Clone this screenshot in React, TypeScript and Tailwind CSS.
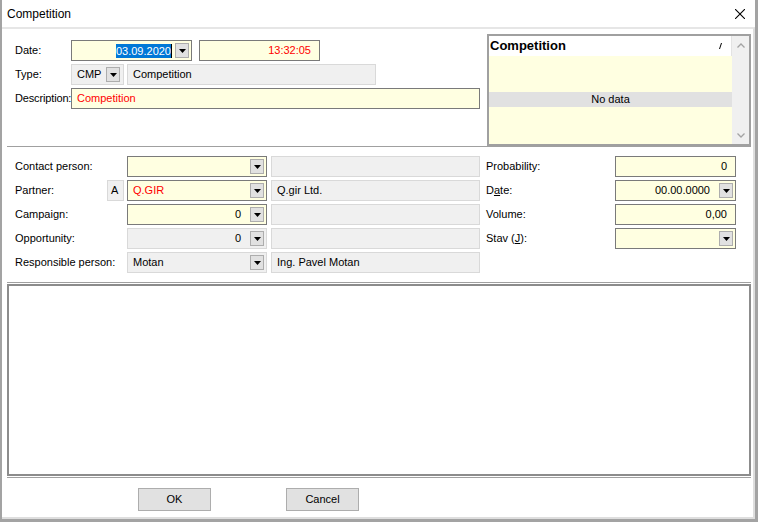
import React from "react";

const Drop = () => (
  <span className="flex h-[15px] w-[14px] shrink-0 items-center justify-center border border-[#adadad] bg-[#e1e1e1]">
    <svg width="7" height="4" viewBox="0 0 7 4">
      <path d="M0 0h7L3.5 4z" fill="#000" />
    </svg>
  </span>
);

type FieldProps = {
  className?: string;
  value?: string;
  yellow?: boolean;
  right?: boolean;
  red?: boolean;
  drop?: boolean;
};

function Field({ className = "", value = "", yellow = false, right = false, red = false, drop = false }: FieldProps) {
  return (
    <div
      className={`flex h-full shrink-0 items-center border ${
        yellow ? "border-[#7a7a7a] bg-[#ffffe1]" : "border-[#d9d9d9] bg-[#f0f0f0]"
      } ${className}`}
    >
      <span
        className={`flex-1 truncate whitespace-nowrap ${right ? "text-right" : "text-left pl-[5px]"} ${
          right ? (drop ? "pr-[9px]" : "pr-[8px]") : ""
        } ${red ? "text-[#ff0000]" : "text-black"}`}
      >
        {value}
      </span>
      {drop && (
        <span className="mr-[2px]">
          <Drop />
        </span>
      )}
    </div>
  );
}

function Row({ children }: { children: React.ReactNode }) {
  return <div className="flex h-[21px] items-center">{children}</div>;
}

export default function App() {
  return (
    <div className="flex h-[522px] w-[758px] flex-col border-b-[3px] border-l-2 border-r-[3px] border-[#a3a3a3] bg-white font-['Liberation_Sans',Arial,sans-serif] text-[11px] text-black">
      {/* title bar */}
      <div className="flex h-[27px] shrink-0 items-center justify-between pl-[5px] pr-[10px]">
        <span className="text-[12px]">Competition</span>
        <svg width="10" height="10" viewBox="0 0 10 10">
          <path d="M0 0L10 10M10 0L0 10" stroke="#000" strokeWidth="1.1" />
        </svg>
      </div>

      <div className="flex flex-1 flex-col border-b-2 border-r-2 border-t-2 border-[#dedede] border-t-[#e6e6e6] pl-[5px] pr-[2px]">
        {/* header section */}
        <div className="flex h-[117px] shrink-0">
          <div className="flex flex-1 flex-col gap-[3px] pl-[8px] pt-[11px]">
            <Row>
              <div className="w-[56px]">Date:</div>
              <div className="flex h-full w-[121px] items-center justify-end border border-[#7a7a7a] bg-[#ffffe1] pr-[2px]">
                <span className="bg-[#0078d7] leading-[14px] text-white">03.09.2020</span>
                <span className="h-[14px] w-px bg-black" />
                <span className="w-[3px]" />
                <Drop />
              </div>
              <Field className="ml-[7px] w-[121px]" yellow right red value="13:32:05" />
            </Row>
            <Row>
              <div className="w-[56px]">Type:</div>
              <div className="flex h-full w-[53px] items-center justify-between border border-[#d9d9d9] bg-[#f0f0f0] pl-[5px] pr-[3px]">
                <span>CMP</span>
                <Drop />
              </div>
              <Field className="ml-[3px] w-[249px]" value="Competition" />
            </Row>
            <Row>
              <div className="relative z-10 w-[56px] shrink-0 whitespace-nowrap tracking-[-0.15px]">Description:</div>
              <Field className="w-[409px]" yellow red value="Competition" />
            </Row>
          </div>

          <div className="mt-[5px] flex h-[112px] w-[264px] border-2 border-[#a0a0a0]">
            <div className="flex flex-1 flex-col bg-[#ffffe1]">
              <div className="flex h-[20px] items-center justify-between border-r border-[#e3e3e3] bg-white pl-[1px] pr-[9px]">
                <span className="text-[13px] font-bold">Competition</span>
                <svg width="3" height="6" viewBox="0 0 3 6">
                  <path d="M2.5 0L0.5 6" stroke="#000" strokeWidth="1" />
                </svg>
              </div>
              <div className="h-[36px]" />
              <div className="flex h-[15px] items-center justify-center bg-[#e1e1e1]">No data</div>
            </div>
            <div className="flex w-[17px] flex-col items-center justify-between bg-[#f0f0f0] pb-[6px] pt-[7px]">
              <svg width="8" height="5" viewBox="0 0 8 5">
                <path d="M0.5 4.5L4 1L7.5 4.5" stroke="#a3a3a3" strokeWidth="1.3" fill="none" />
              </svg>
              <svg width="8" height="5" viewBox="0 0 8 5">
                <path d="M0.5 0.5L4 4L7.5 0.5" stroke="#a3a3a3" strokeWidth="1.3" fill="none" />
              </svg>
            </div>
          </div>
        </div>

        <div className="h-px shrink-0 bg-[#a0a0a0]" />
        <div className="h-px shrink-0 bg-white" />

        {/* detail section */}
        <div className="flex h-[134px] shrink-0 flex-col gap-[3px] pl-[8px] pt-[8px]">
          <Row>
            <div className="w-[92px]">Contact person:</div>
            <div className="w-[17px]" />
            <Field className="ml-[3px] w-[140px]" yellow drop />
            <Field className="ml-[4px] w-[209px]" />
            <div className="ml-[6px] w-[129px]">Probability:</div>
            <Field className="w-[121px]" yellow right value="0" />
          </Row>
          <Row>
            <div className="w-[92px]">Partner:</div>
            <div className="flex h-full w-[17px] items-center border border-[#d9d9d9] bg-[#f0f0f0] pl-[3px]">A</div>
            <Field className="ml-[3px] w-[140px]" yellow red drop value="Q.GIR" />
            <Field className="ml-[4px] w-[209px]" value="Q.gir Ltd." />
            <div className="ml-[6px] w-[129px]">
              D<span className="underline">a</span>te:
            </div>
            <Field className="w-[121px]" yellow right drop value="00.00.0000" />
          </Row>
          <Row>
            <div className="w-[92px]">Campaign:</div>
            <div className="w-[17px]" />
            <Field className="ml-[3px] w-[140px]" yellow right drop value="0" />
            <Field className="ml-[4px] w-[209px]" />
            <div className="ml-[6px] w-[129px]">Volume:</div>
            <Field className="w-[121px]" yellow right value="0,00" />
          </Row>
          <Row>
            <div className="w-[92px]">Opportunity:</div>
            <div className="w-[17px]" />
            <Field className="ml-[3px] w-[140px]" right drop value="0" />
            <Field className="ml-[4px] w-[209px]" />
            <div className="ml-[6px] w-[129px]">
              Stav (<span className="underline">J</span>):
            </div>
            <Field className="w-[121px]" yellow right drop />
          </Row>
          <Row>
            <div className="w-[92px] whitespace-nowrap">Responsible person:</div>
            <div className="w-[17px]" />
            <Field className="ml-[3px] w-[140px]" drop value="Motan" />
            <Field className="ml-[4px] w-[209px]" value="Ing. Pavel Motan" />
          </Row>
        </div>

        <div className="h-px shrink-0 bg-[#a0a0a0]" />
        <div className="h-px shrink-0 bg-white" />

        {/* memo */}
        <div className="h-[192px] shrink-0 border-2 border-[#8c8c8c] bg-white" />

        <div className="h-px shrink-0 bg-white" />
        <div className="h-px shrink-0 bg-[#a0a0a0]" />

        {/* buttons */}
        <div className="flex flex-1 items-start gap-[75px] pl-[131px] pt-[10px]">
          <button className="flex h-[23px] w-[73px] items-center justify-center border border-[#adadad] bg-[#e1e1e1]">OK</button>
          <button className="flex h-[23px] w-[73px] items-center justify-center border border-[#adadad] bg-[#e1e1e1]">Cancel</button>
        </div>
      </div>
    </div>
  );
}
